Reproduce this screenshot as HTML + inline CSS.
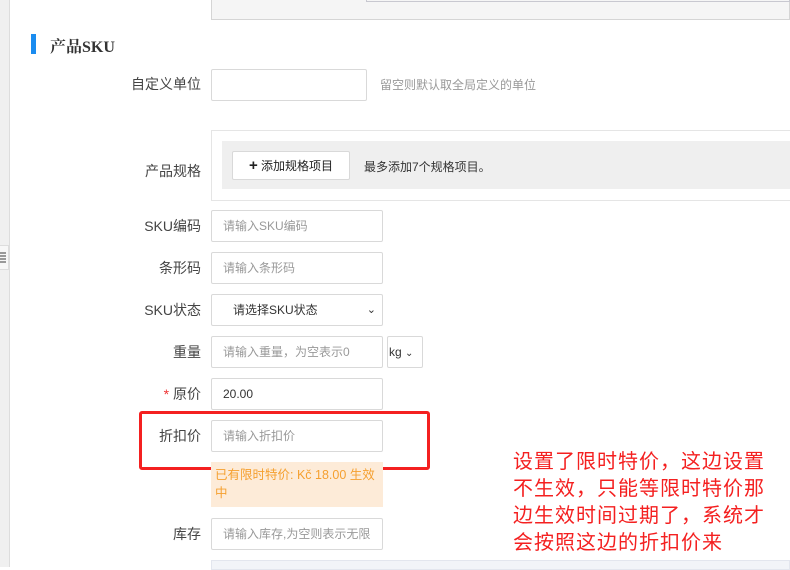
<!DOCTYPE html>
<html><head><meta charset="utf-8"><style>
*{box-sizing:border-box;margin:0;padding:0}
body{width:790px;height:567px;overflow:hidden;background:#fff;font-family:"Liberation Sans","Noto Sans CJK SC",sans-serif;font-size:13px;color:#333;position:relative}
.a{position:absolute}
.lbl{position:absolute;right:589px;font-size:14px;color:#444;white-space:nowrap}
.in{position:absolute;left:211px;width:172px;height:32px;border:1px solid #d9d9d9;border-radius:2px;background:#fff;padding-left:11px;line-height:30px;font-size:12px;color:#999}
</style></head><body>
<div class="a" style="left:0;top:0;width:10px;height:567px;background:#f0f0f0;border-right:1px solid #ddd"></div>
<div class="a" style="left:0;top:245px;width:9px;height:25px;background:#f7f7f7;border:1px solid #ddd;border-left:none"></div>
<div class="a" style="left:0;top:252px;width:6px;height:2px;background:#999;box-shadow:0 3px #999,0 6px #999,0 9px #999"></div>
<div class="a" style="left:211px;top:0;width:579px;height:20px;background:#f5f5f5;border:1px solid #d5d5d5;border-top:none"></div>
<div class="a" style="left:366px;top:0;width:424px;height:2px;border:1px solid #c8c8d0;border-top:none"></div>
<div class="a" style="left:31px;top:34px;width:5px;height:20px;background:#1a8cf0"></div>
<div class="a" style="left:50px;top:34px;font-size:16px;font-weight:bold;font-family:'Liberation Serif','Noto Serif CJK SC',serif;color:#333">产品SKU</div>
<div class="lbl" style="top:74px">自定义单位</div>
<div class="in" style="top:69px;width:156px"></div>
<div class="a" style="left:380px;top:76px;font-size:12px;color:#999">留空则默认取全局定义的单位</div>
<div class="lbl" style="top:161px">产品规格</div>
<div class="a" style="left:211px;top:130px;width:590px;height:71px;border:1px solid #e5e5e5"></div>
<div class="a" style="left:222px;top:141px;width:570px;height:48px;background:#efefef"></div>
<div class="a" style="left:232px;top:151px;width:118px;height:29px;background:#fff;border:1px solid #d9d9d9;border-radius:2px;font-size:12px;line-height:27px;text-align:center;color:#222"><b style="font-size:15px">+</b> 添加规格项目</div>
<div class="a" style="left:364px;top:158px;font-size:12px;color:#333">最多添加7个规格项目。</div>
<div class="lbl" style="top:216px">SKU编码</div>
<div class="in" style="top:210px">请输入SKU编码</div>
<div class="lbl" style="top:258px">条形码</div>
<div class="in" style="top:252px">请输入条形码</div>
<div class="lbl" style="top:300px">SKU状态</div>
<div class="in" style="top:294px;color:#333;padding-left:21px">请选择SKU状态<span class="a" style="right:6px;top:0;font-size:11px">&#8964;</span></div>
<div class="lbl" style="top:342px">重量</div>
<div class="in" style="top:336px">请输入重量，为空表示0</div>
<div class="in" style="top:336px;left:387px;width:36px;padding-left:1px;color:#333">kg <span style="font-size:10px">&#8964;</span></div>
<div class="lbl" style="top:384px"><span style="color:#e33">*</span> 原价</div>
<div class="in" style="top:378px;color:#333">20.00</div>
<div class="lbl" style="top:426px">折扣价</div>
<div class="in" style="top:420px">请输入折扣价</div>
<div class="a" style="left:139px;top:411px;width:291px;height:59px;border:3px solid #f42020;border-radius:3px"></div>
<div class="a" style="left:211px;top:462px;width:172px;height:45px;background:#fdebd8;color:#f5a030;font-size:12.5px;line-height:18px;padding:4px 4px">已有限时特价: Kč 18.00 生效<br>中</div>
<div class="lbl" style="top:524px">库存</div>
<div class="in" style="top:518px">请输入库存,为空则表示无限</div>
<div class="a" style="left:211px;top:560px;width:579px;height:10px;background:#f2f4f8;border:1px solid #e3e6ee"></div>
<div class="a" style="left:513px;top:449px;width:256px;font-size:20px;letter-spacing:1px;line-height:27px;color:#f42020">设置了限时特价，这边设置<br>不生效，只能等限时特价那<br>边生效时间过期了，系统才<br>会按照这边的折扣价来</div>
</body></html>
